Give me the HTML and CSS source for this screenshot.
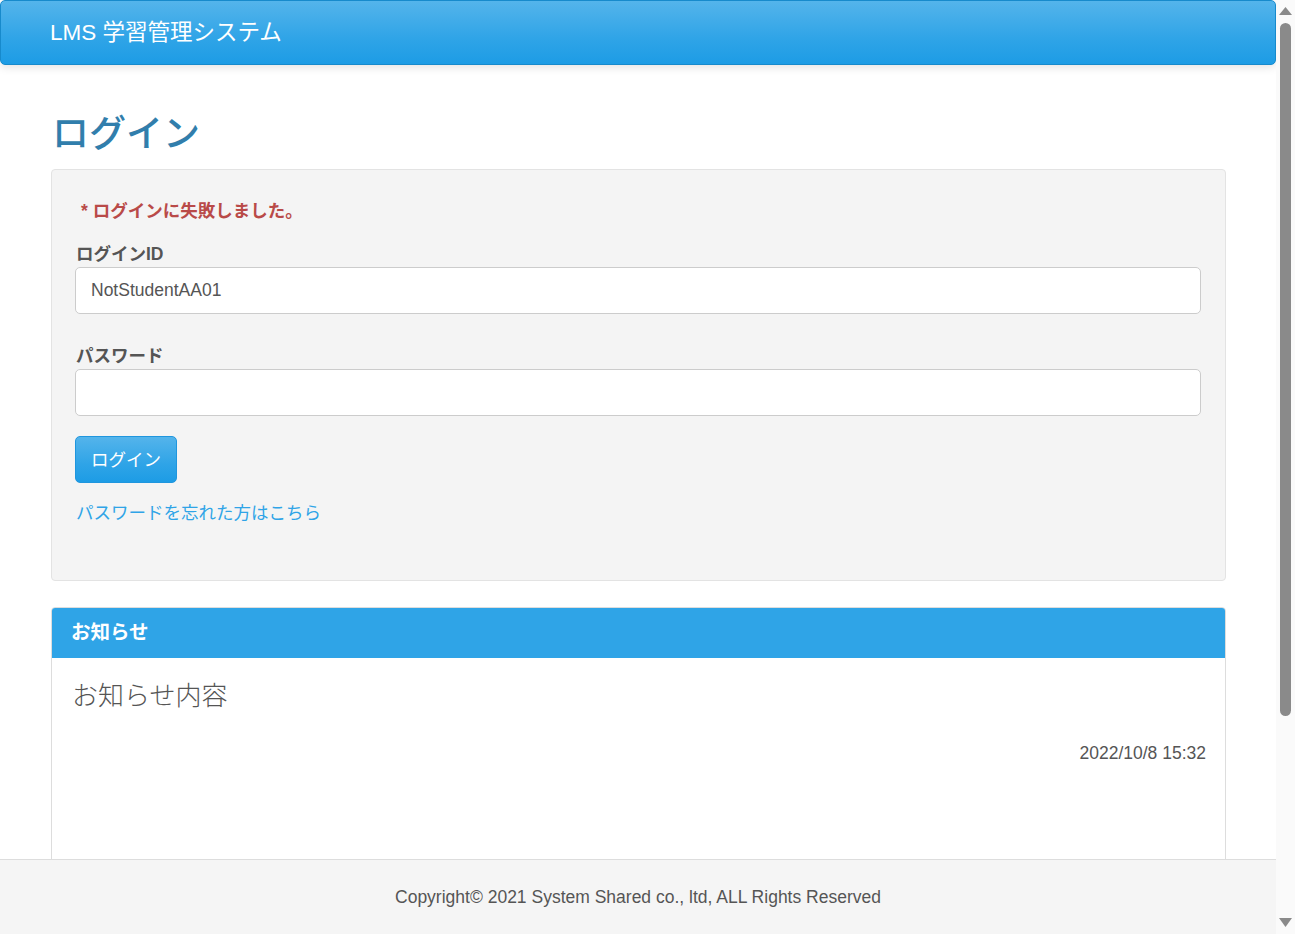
FILE: index.html
```html
<!DOCTYPE html>
<html lang="ja">
<head>
<meta charset="utf-8">
<title>LMS 学習管理システム</title>
<link rel="stylesheet" href="styles.css">
</head>
<body>
<div class="page">
  <header class="navbar">
    <span class="brand">LMS 学習管理システム</span>
  </header>
  <main class="main">
    <h1 class="page-title">ログイン</h1>
    <section class="well">
      <p class="error">* ログインに失敗しました。</p>
      <div class="form-group">
        <label class="label" for="loginId">ログインID</label>
        <input class="input" id="loginId" type="text" value="NotStudentAA01">
      </div>
      <div class="form-group">
        <label class="label" for="password">パスワード</label>
        <input class="input" id="password" type="password" value="">
      </div>
      <button class="btn" type="button">ログイン</button>
      <a class="forgot" href="#">パスワードを忘れた方はこちら</a>
    </section>
    <section class="panel">
      <div class="panel-heading">お知らせ</div>
      <div class="panel-body">
        <div class="notice-title">お知らせ内容</div>
        <div class="notice-date">2022/10/8 15:32</div>
      </div>
    </section>
  </main>
  <footer class="footer">Copyright© 2021 System Shared co., ltd, ALL Rights Reserved</footer>
</div>
<div class="scrollbar" aria-hidden="true">
  <svg class="sb-arrow" width="19" height="22" viewBox="0 0 19 22"><path d="M9.5 7 L16 15 L3 15 Z" fill="#8a8a8a"/></svg>
  <div class="sb-thumb"></div>
  <div class="sb-track"></div>
  <svg class="sb-arrow" width="19" height="22" viewBox="0 0 19 22"><path d="M3 6 L16 6 L9.5 15 Z" fill="#8a8a8a"/></svg>
</div>
</body>
</html>
```
FILE: styles.css
```css
body {
  margin: 0;
  font-family: "Liberation Sans", Arial, "Noto Sans CJK JP", sans-serif;
  font-size: 17.5px;
  line-height: 25px;
  color: #555555;
  background: #ffffff;
}

.page {
  margin-right: 19px;
}

.navbar {
  box-sizing: border-box;
  height: 65px;
  border: 1px solid #178acc;
  border-radius: 5px;
  background-image: linear-gradient(#54b4eb, #2fa4e7 60%, #1d9ce5);
  box-shadow: 0 2px 10px rgba(0, 0, 0, 0.12);
  display: flex;
  align-items: center;
  padding-left: 49px;
}
.brand {
  color: #ffffff;
  font-size: 22.5px;
  line-height: 28px;
}

.main {
  padding: 49px 50px 97px 51px;
}

.page-title {
  margin: 0 0 14px 1px;
  font-size: 37px;
  line-height: 41px;
  font-weight: 500;
  color: #317eac;
}

.well {
  box-sizing: border-box;
  height: 412px;
  background: #f4f4f4;
  border: 1px solid #e3e3e3;
  border-radius: 4px;
  padding: 29px 24px 24px 23px;
  display: flex;
  flex-direction: column;
  align-items: flex-start;
}

.error {
  margin: 0 0 18px 6px;
  color: #b94a48;
  font-weight: bold;
  font-size: 17.5px;
}

.form-group {
  align-self: stretch;
  display: flex;
  flex-direction: column;
  margin-bottom: 30px;
}
.form-group + .form-group {
  margin-bottom: 20px;
}
.label {
  font-weight: bold;
  color: #555555;
  margin: 0 0 0 1px;
}
.input {
  box-sizing: border-box;
  height: 47px;
  padding: 0 15px;
  font-family: inherit;
  font-size: 17.5px;
  color: #555555;
  background: #ffffff;
  border: 1px solid #cccccc;
  border-radius: 5px;
  outline: none;
}

.btn {
  box-sizing: border-box;
  height: 47px;
  width: 102px;
  padding: 0 0 3px;
  font-family: inherit;
  font-size: 17.5px;
  color: #ffffff;
  background-image: linear-gradient(#54b4eb, #2fa4e7 60%, #1d9ce5);
  border: 1px solid #1f96de;
  border-radius: 5px;
  cursor: pointer;
  margin-bottom: 18px;
}

.forgot {
  color: #2fa4e7;
  text-decoration: none;
  margin-left: 1px;
}

.panel {
  margin-top: 26px;
  border: 1px solid #dddddd;
  border-radius: 4px;
  background: #ffffff;
  height: 503px;
  box-sizing: border-box;
  overflow: hidden;
}
.panel-heading {
  height: 50px;
  box-sizing: border-box;
  background: #2fa4e7;
  color: #ffffff;
  font-weight: bold;
  font-size: 19.5px;
  display: flex;
  align-items: center;
  padding-left: 19px;
  padding-bottom: 2px;
}
.panel-body {
  padding: 24px 19px 20px 20px;
}
.notice-title {
  font-size: 26px;
  line-height: 29px;
  color: #555555;
  font-weight: 300;
}
.notice-date {
  text-align: right;
  margin-top: 30px;
}

.footer {
  position: fixed;
  left: 0;
  right: 19px;
  bottom: 0;
  height: 75px;
  box-sizing: border-box;
  background: #f5f5f5;
  border-top: 1px solid #dddddd;
  display: flex;
  align-items: center;
  justify-content: center;
  color: #555555;
  padding-top: 1px;
}

.scrollbar {
  position: fixed;
  top: 0;
  right: 0;
  bottom: 0;
  width: 19px;
  background: #fafafa;
  display: flex;
  flex-direction: column;
  align-items: center;
}
.sb-arrow {
  display: block;
  flex: none;
}
.sb-thumb {
  flex: none;
  width: 11px;
  height: 693px;
  margin-top: 1px;
  background: #8a8a8a;
  border-radius: 6px;
}
.sb-track {
  flex: 1;
}
```
